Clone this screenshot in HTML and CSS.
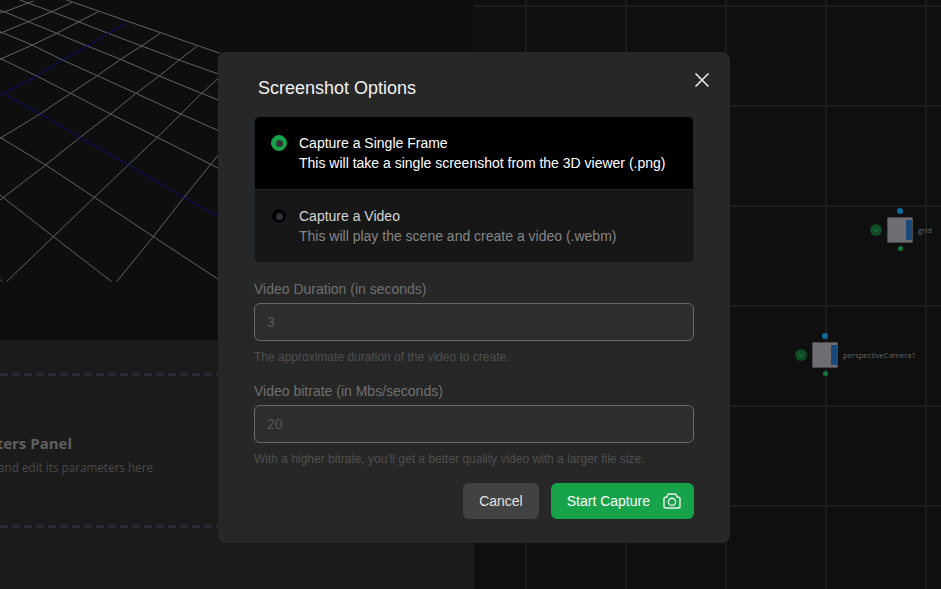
FILE: index.html
```html
<!doctype html>
<html>
  <head>
    <title>Screenshot Options</title>
    <link rel="stylesheet" href="styles.css">
  </head>
  <body>
    <div class="app">
      <div class="left">
        <div class="viewer">
          <svg class="floor" width="230" height="282" viewBox="0 0 690 846">
            <g class="floor-lines">
              <polyline points="200,0 660,160"/>
              <polyline points="60,0 155,35 235,65 325,100 425,138 537,180 655,222"/>
              <polyline points="0,30 85,65 170,100 262,138 362,178 478,228 605,280 655,300"/>
              <polyline points="0,95 97,135 187,180 292,227 408,280 543,342 655,392"/>
              <polyline points="0,175 110,228 212,280 332,342 472,412 632,493 655,505"/>
              <polyline points="0,412 137,495 283,592 460,710 655,838"/>
              <polyline points="0,585 160,710 335,845"/>
              <polyline points="0,838 7,845"/>
              <polyline points="0,38 15,35 100,3"/>
              <polyline points="0,100 85,65 155,35 215,8"/>
              <polyline points="0,178 97,135 170,100 237,65 295,35"/>
              <polyline points="0,415 120,342 212,280 292,227 362,178 425,138 480,100"/>
              <polyline points="0,600 137,495 240,412 332,342 408,280 478,228 537,180 590,140"/>
              <polyline points="20,845 160,710 283,592 385,495 472,412 543,342 605,280 655,235"/>
              <polyline points="350,845 460,710 552,592 632,493 655,465"/>
            </g>
            <g class="floor-axes">
              <polyline points="0,285 110,228 187,180 262,138 325,100 385,67"/>
              <polyline points="15,283 120,342 240,412 385,495 552,592 655,650"/>
            </g>
          </svg>
        </div>
        <div class="params">
          <div class="params-dash">
            <div class="params-hint">
              <div class="params-title">Parameters Panel</div>
              <div class="params-sub">Select a node and edit its parameters here</div>
            </div>
          </div>
        </div>
      </div>

      <div class="graph">
        <div class="node node-grid">
          <span class="node-in"></span>
          <span class="node-flag"><svg width="6" height="5" viewBox="0 0 6 5"><path d="M0.5 0.5L3 4L5.5 0.5"/></svg></span>
          <span class="node-box"><span class="node-bar"></span></span>
          <span class="node-out"></span>
          <span class="node-label">grid</span>
        </div>
        <div class="node node-camera">
          <span class="node-in"></span>
          <span class="node-flag"><svg width="6" height="5" viewBox="0 0 6 5"><path d="M0.5 0.5L3 4L5.5 0.5"/></svg></span>
          <span class="node-box"><span class="node-bar"></span></span>
          <span class="node-out"></span>
          <span class="node-label">perspectiveCamera1</span>
        </div>
      </div>
    </div>

    <div class="modal">
      <h2 class="modal-title">Screenshot Options</h2>
      <button class="close" aria-label="Close">
        <svg width="14" height="14" viewBox="0 0 14 14"><path d="M0.5 0.5L13.5 13.5M13.5 0.5L0.5 13.5"/></svg>
      </button>

      <div class="choices">
        <div class="choice choice-on">
          <span class="radio"></span>
          <div>
            <div class="choice-name">Capture a Single Frame</div>
            <div class="choice-desc">This will take a single screenshot from the 3D viewer (.png)</div>
          </div>
        </div>
        <div class="choice">
          <span class="radio"></span>
          <div>
            <div class="choice-name">Capture a Video</div>
            <div class="choice-desc">This will play the scene and create a video (.webm)</div>
          </div>
        </div>
      </div>

      <div class="field">
        <label class="field-label">Video Duration (in seconds)</label>
        <input class="field-input" type="text" placeholder="3">
        <div class="field-help">The approximate duration of the video to create.</div>
      </div>

      <div class="field">
        <label class="field-label">Video bitrate (in Mbs/seconds)</label>
        <input class="field-input" type="text" placeholder="20">
        <div class="field-help">With a higher bitrate, you'll get a better quality video with a larger file size.</div>
      </div>

      <div class="actions">
        <button class="btn btn-cancel">Cancel</button>
        <button class="btn btn-start">
          Start Capture
          <svg class="camera" width="18" height="16" viewBox="0 0 18 16">
            <path d="M1 5.6Q1 4.2 2.4 4.2H3.6L5.4 1H12.6L14.4 4.2H15.6Q17 4.2 17 5.6V13.2Q17 15 15.2 15H2.8Q1 15 1 13.2Z"/>
            <circle cx="9" cy="8.8" r="3.6"/>
          </svg>
        </button>
      </div>
    </div>
  </body>
</html>
```

FILE: styles.css
```css
* {
  box-sizing: border-box;
}

body {
  margin: 0;
  height: 589px;
  overflow: hidden;
  background: #0f0f0f;
  font-family: "Liberation Sans", Arial, sans-serif;
  font-size: 14px;
}

.app {
  display: flex;
  height: 100%;
}

.left {
  display: flex;
  flex-direction: column;
  width: 474px;
}

.viewer {
  height: 340px;
  background: #0e0e0e;
}

.floor {
  display: block;
}

.floor polyline {
  fill: none;
  stroke-width: 3;
}

.floor-lines polyline {
  stroke: #636363;
}

.floor-axes polyline {
  stroke: #0c0c70;
}

.params {
  flex: 1;
  padding-top: 33px;
  background: #1b1b1b;
}

.params-dash {
  height: 155px;
  background-image:
    repeating-linear-gradient(to right, #262832 0 8px, transparent 8px 12px),
    repeating-linear-gradient(to right, #262832 0 8px, transparent 8px 12px);
  background-repeat: no-repeat;
  background-position: 0 0, 0 100%;
  background-size: 100% 3px;
}

.params-hint {
  display: flex;
  flex-direction: column;
  align-items: flex-end;
  width: 153px;
  padding-top: 60px;
  white-space: nowrap;
  font-family: "Open Sans", sans-serif;
}

.params-title {
  margin-right: 81px;
  color: #606060;
  font-size: 15px;
  font-weight: 700;
  line-height: 20px;
}

.params-sub {
  margin-top: 5px;
  color: #4a4a4a;
  font-size: 11.7px;
  line-height: 18px;
}

.graph {
  position: relative;
  flex: 1;
  background-color: #0f0f0f;
  background-image:
    repeating-linear-gradient(to bottom, transparent 0 5px, #1c1c1c 5px 7px, transparent 7px 100px),
    repeating-linear-gradient(to right, transparent 0 51px, #1c1c1c 51px 53px, transparent 53px 100px);
}

/* nodes sit on the free graph canvas */
.node {
  position: absolute;
  width: 26px;
  height: 26px;
}

.node-grid {
  left: 413px;
  top: 217px;
}

.node-camera {
  left: 338px;
  top: 342px;
}

.node-box {
  display: block;
  position: relative;
  width: 26px;
  height: 26px;
  background: #6e6d74;
  border: 1px solid #49484d;
  border-radius: 1px;
}

.node-bar {
  position: absolute;
  right: 0;
  top: 2px;
  width: 6px;
  height: 20px;
  background: #17497a;
}

.node-in,
.node-out,
.node-flag {
  position: absolute;
  border-radius: 50%;
}

.node-in {
  left: 10px;
  top: -9px;
  width: 6px;
  height: 6px;
  background: #0e6a9f;
}

.node-out {
  left: 10.5px;
  top: 29px;
  width: 5px;
  height: 5px;
  background: #14773a;
}

.node-flag {
  display: flex;
  align-items: center;
  justify-content: center;
  left: -17px;
  top: 7px;
  width: 12px;
  height: 12px;
  background: #0f4a24;
}

.node-flag path {
  fill: none;
  stroke: #2b7a4a;
  stroke-width: 1;
}

.node-label {
  position: absolute;
  left: 31px;
  top: 8px;
  color: #666;
  font-family: "Open Sans", sans-serif;
  font-size: 7.6px;
  line-height: 10px;
  white-space: nowrap;
}

/* dialog over the dimmed app */
.modal {
  position: absolute;
  left: 218px;
  top: 52px;
  width: 512px;
  height: 491px;
  padding: 24px 36px;
  background: #272727;
  border-radius: 8px;
}

.modal-title {
  margin: 0 0 16px 4px;
  color: #f2f2f2;
  font-size: 18px;
  font-weight: 400;
  line-height: 24px;
}

.close {
  position: absolute;
  top: 21px;
  right: 21px;
  display: flex;
  padding: 0;
  background: none;
  border: 0;
}

.close path {
  fill: none;
  stroke: #f0f0f0;
  stroke-width: 1.5;
}

.choices {
  overflow: hidden;
  margin-bottom: 16px;
  background: #171717;
  border: 1px solid #1e222c;
  border-radius: 6px;
}

.choice {
  display: flex;
  gap: 12px;
  height: 72px;
  padding: 16px;
  line-height: 20px;
}

.choice + .choice {
  height: 73px;
  border-top: 1px solid #22262f;
}

.choice-on {
  background: #000;
}

.radio {
  display: flex;
  align-items: center;
  justify-content: center;
  flex: none;
  width: 16px;
  height: 16px;
  margin-top: 2px;
  background: #000;
  border: 1px solid #1c1f2a;
  border-radius: 50%;
}

.radio::after {
  content: "";
  width: 7px;
  height: 7px;
  background: #333;
  border-radius: 50%;
}

.choice-on .radio {
  background: #16a34a;
  border-color: #16a34a;
}

.choice-name {
  color: #d6d6d6;
}

.choice-desc {
  color: #858585;
}

.choice-on .choice-name,
.choice-on .choice-desc {
  color: #fff;
}

.field {
  margin-bottom: 16px;
}

.field-label {
  display: block;
  margin-bottom: 4px;
  color: #707070;
  line-height: 20px;
}

.field-input {
  display: block;
  width: 100%;
  height: 38px;
  padding: 0 12px;
  background: #2d2d2d;
  border: 1px solid #6a6a6a;
  border-radius: 6px;
  font-family: inherit;
  font-size: 14px;
}

.field-input::placeholder {
  color: #585858;
}

.field-help {
  margin-top: 8px;
  color: #4f4f4f;
  font-size: 12px;
  line-height: 16px;
}

.actions {
  display: flex;
  justify-content: flex-end;
  gap: 12px;
}

.btn {
  display: flex;
  align-items: center;
  height: 36px;
  padding: 0 16px;
  border: 0;
  border-radius: 6px;
  font-family: inherit;
  font-size: 14px;
}

.btn-cancel {
  background: #424242;
  color: #e2e2e2;
}

.btn-start {
  gap: 13px;
  background: #16a34a;
  color: #fff;
  padding-right: 13px;
}

.camera path,
.camera circle {
  fill: none;
  stroke: #f0f0f0;
  stroke-width: 1.4;
}
```
